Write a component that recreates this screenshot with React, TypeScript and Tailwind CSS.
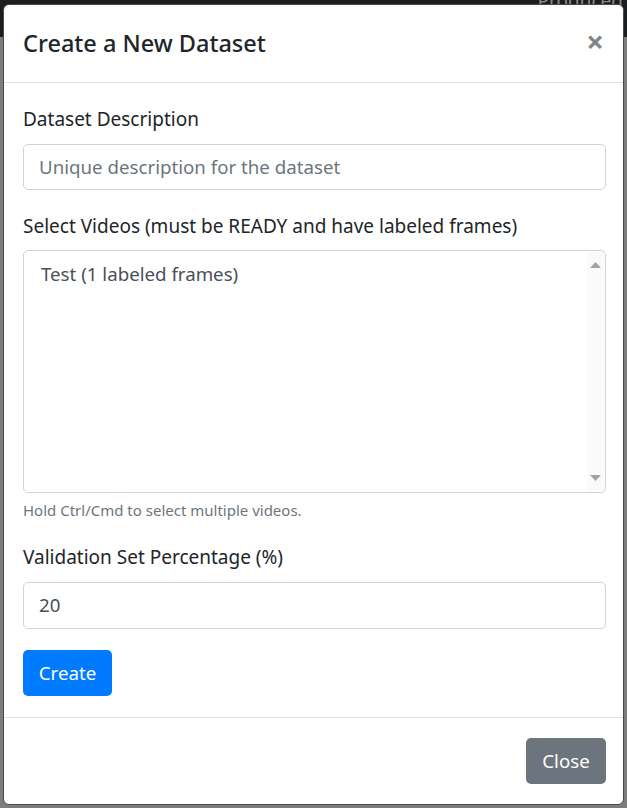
export default function App() {
  return (
    <div className="relative h-[808px] w-[627px] overflow-hidden bg-[#7d7d7d] font-['Noto_Sans',sans-serif]">
      {/* page behind the backdrop */}
      <div className="h-[37px] bg-[#1c1d1f]" />
      <div className="absolute right-[4px] top-[-13px] text-[19px] text-[#8a8a8a]">Produced</div>

      {/* modal */}
      <div className="absolute left-[3px] top-[4px] flex w-[621px] flex-col rounded-[6px] border border-[#4a4a4a] bg-white">
        <div className="flex h-[78px] items-center justify-between border-b border-[#dee2e6] pl-[19px] pr-[19px]">
          <h5 className="text-[23.5px] font-medium leading-none text-[#212529]">Create a New Dataset</h5>
          <button className="pb-[4px] text-[31px] font-bold leading-none text-[#838383]">×</button>
        </div>

        <div className="flex flex-col pl-[19px] pr-[17px] pt-[22px]">
          <label className="text-[19px] leading-[28px] text-[#212529]">Dataset Description</label>
          <div className="mt-[11px] flex h-[46px] items-center rounded-[5px] border border-[#ced4da] px-[15px] text-[18.7px] text-[#6c757d]">
            Unique description for the dataset
          </div>

          <label className="mt-[22px] text-[19px] leading-[28px] text-[#212529]">
            Select Videos (must be READY and have labeled frames)
          </label>
          <div className="mt-[10px] flex h-[243px] rounded-[5px] border border-[#ced4da]">
            <div className="flex-1 pl-[17px] pt-[9px] text-[18.7px] leading-[28px] text-[#495057]">
              Test (1 labeled frames)
            </div>
            <div className="my-[1px] mr-[1px] flex w-[17px] flex-col items-center justify-between bg-[#fafafa] py-[10px]">
              <svg width="11" height="6" viewBox="0 0 11 6">
                <path d="M5.5 0 L11 6 L0 6 Z" fill="#a3a3a3" />
              </svg>
              <svg width="11" height="6" viewBox="0 0 11 6">
                <path d="M0 0 L11 0 L5.5 6 Z" fill="#a3a3a3" />
              </svg>
            </div>
          </div>
          <div className="mt-[6px] text-[15px] leading-[22px] text-[#6c757d]">Hold Ctrl/Cmd to select multiple videos.</div>

          <label className="mt-[22px] text-[19px] leading-[28px] text-[#212529]">Validation Set Percentage (%)</label>
          <div className="mt-[11px] flex h-[47px] items-center rounded-[5px] border border-[#ced4da] px-[15px] text-[18.7px] text-[#495057]">
            20
          </div>

          <div className="mb-[21px] mt-[21px]">
            <button className="h-[46px] w-[89px] rounded-[5px] bg-[#007bff] text-[18.7px] text-white">Create</button>
          </div>
        </div>

        <div className="flex justify-end border-t border-[#dee2e6] pb-[20px] pr-[17px] pt-[20px]">
          <button className="h-[46px] w-[80px] rounded-[5px] bg-[#6c757d] text-[18.7px] text-white">Close</button>
        </div>
      </div>
    </div>
  );
}
